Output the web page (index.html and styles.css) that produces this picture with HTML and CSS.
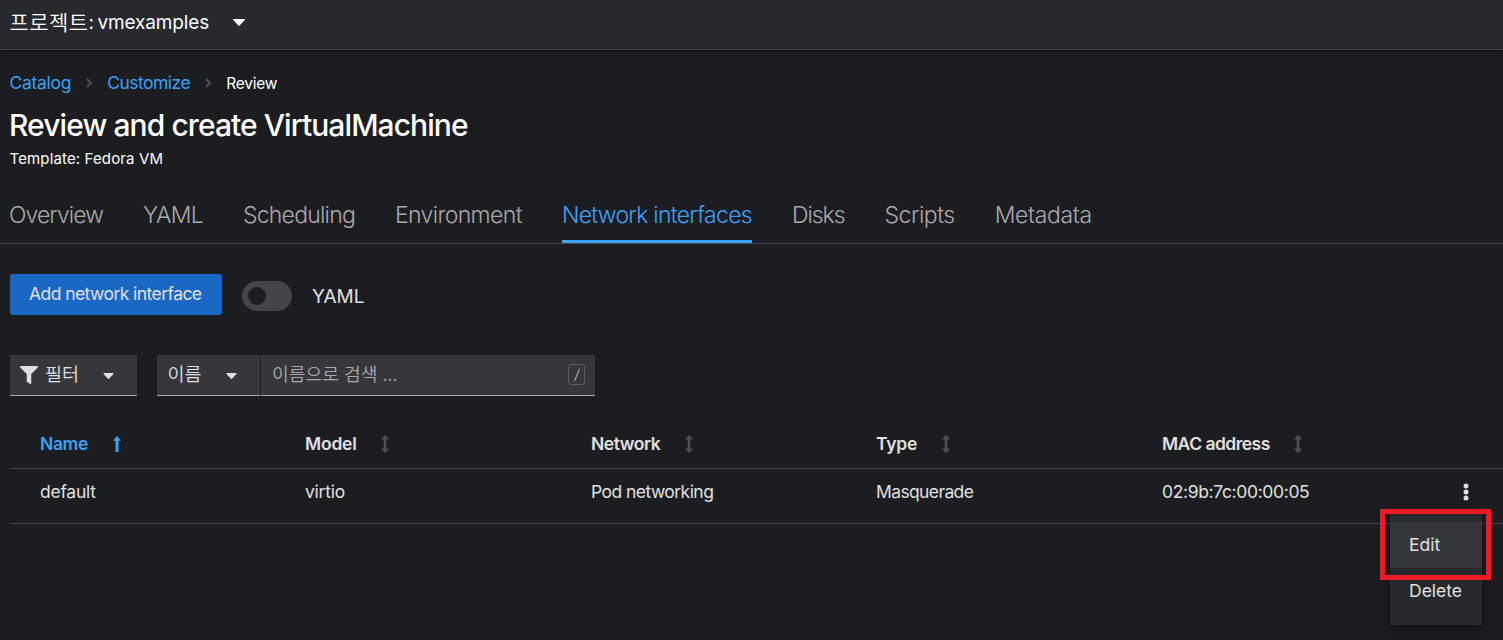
FILE: index.html
```html
<!DOCTYPE html>
<html lang="ko">
<head>
<meta charset="utf-8">
<title>Review and create VirtualMachine</title>
<link rel="stylesheet" href="styles.css">
</head>
<body>
<header class="project-bar">
  <button class="project-toggle"><span class="project-label"><span class="ko">프로젝트</span><span class="project-name">: vmexamples</span></span><svg class="caret" width="12" height="7" viewBox="0 0 12 7"><path d="M.7 0h10.600c.6 0 .9.7.5 1.100L6.600 6.600a.9.9 0 0 1-1.200 0L.2 1.100C-.2.7.1 0 .7 0z"/></svg></button>
</header>
<main class="page">
  <nav class="breadcrumb">
    <a class="crumb catalog" href="#">Catalog</a>
    <svg class="chevron" width="7" height="10" viewBox="0 0 7 10"><path d="M1 1l4 4-4 4"/></svg>
    <a class="crumb customize" href="#">Customize</a>
    <svg class="chevron" width="7" height="10" viewBox="0 0 7 10"><path d="M1 1l4 4-4 4"/></svg>
    <span class="current">Review</span>
  </nav>
  <h1 class="title">Review and create VirtualMachine</h1>
  <p class="template">Template: Fedora VM</p>
  <nav class="tabs">
    <a class="tab tab-overview">Overview</a>
    <a class="tab tab-yaml">YAML</a>
    <a class="tab tab-scheduling">Scheduling</a>
    <a class="tab tab-environment">Environment</a>
    <a class="tab tab-network active">Network interfaces</a>
    <a class="tab tab-disks">Disks</a>
    <a class="tab tab-scripts">Scripts</a>
    <a class="tab tab-metadata">Metadata</a>
  </nav>
  <div class="actions">
    <button class="primary">Add network interface</button>
    <span class="switch"><span class="knob"></span></span>
    <span class="switch-label">YAML</span>
  </div>
  <div class="filters">
    <button class="select filter"><svg class="funnel" width="18" height="18" viewBox="0 0 512 512"><path d="M488 0H24C2.700 0-8 25.900 7.100 41L192 225.900V432c0 7.800 3.800 15.200 10.200 19.700l80 56C298 518.700 320 507.500 320 488V225.900L504.900 41C520 25.900 509.300 0 488 0z"/></svg><span class="ko">필터</span><svg class="caret" width="11" height="6" viewBox="0 0 12 7"><path d="M.7 0h10.600c.6 0 .9.7.5 1.100L6.600 6.600a.9.9 0 0 1-1.200 0L.2 1.100C-.2.7.1 0 .7 0z"/></svg></button>
    <button class="select field"><span class="ko">이름</span><svg class="caret" width="11" height="6" viewBox="0 0 12 7"><path d="M.7 0h10.600c.6 0 .9.7.5 1.100L6.600 6.600a.9.9 0 0 1-1.200 0L.2 1.100C-.2.7.1 0 .7 0z"/></svg></button>
    <div class="search"><span class="placeholder">이름으로 검색 ...</span><kbd class="slash"><svg width="8" height="14" viewBox="0 0 8 14"><path d="M1.500 13l5-12"/></svg></kbd></div>
  </div>
  <section class="table">
    <div class="row head">
      <span class="cell sorted"><span class="h-name">Name</span><svg class="sort-up" width="8" height="16" viewBox="0 0 8 16"><path d="M4 0l4 4.800H5.500V16h-3V4.800H0z"/></svg></span>
      <span class="cell"><span class="h-model">Model</span><svg class="sort" width="8" height="18" viewBox="0 0 8 18"><path d="M4 0l4 4.600H5.300v8.800H8L4 18l-4-4.600h2.700V4.600H0z"/></svg></span>
      <span class="cell"><span class="h-network">Network</span><svg class="sort" width="8" height="18" viewBox="0 0 8 18"><path d="M4 0l4 4.600H5.300v8.800H8L4 18l-4-4.600h2.700V4.600H0z"/></svg></span>
      <span class="cell"><span class="h-type">Type</span><svg class="sort" width="8" height="18" viewBox="0 0 8 18"><path d="M4 0l4 4.600H5.300v8.800H8L4 18l-4-4.600h2.700V4.600H0z"/></svg></span>
      <span class="cell"><span class="h-mac">MAC address</span><svg class="sort" width="8" height="18" viewBox="0 0 8 18"><path d="M4 0l4 4.600H5.300v8.800H8L4 18l-4-4.600h2.700V4.600H0z"/></svg></span>
    </div>
    <div class="row body">
      <span class="cell c-name">default</span>
      <span class="cell c-model">virtio</span>
      <span class="cell c-network">Pod networking</span>
      <span class="cell c-type">Masquerade</span>
      <span class="cell c-mac">02:9b:7c:00:00:05</span>
      <span class="kebab"><svg width="6" height="18" viewBox="0 0 6 18"><circle cx="3" cy="3" r="2.500"/><circle cx="3" cy="9" r="2.500"/><circle cx="3" cy="15" r="2.500"/></svg></span>
    </div>
  </section>
</main>
<div class="menu">
  <a class="item hover">Edit</a>
  <a class="item">Delete</a>
</div>
<div class="highlight"></div>
</body>
</html>
```
FILE: styles.css
```css
* { box-sizing: border-box; }
html, body { margin: 0; height: 640px; overflow: hidden; }
body {
  position: relative;
  background: #1c1d21;
  color: #e0e0e0;
  font: 400 17.5px/24px Inter, "Noto Sans CJK KR", sans-serif;
  white-space: nowrap;
}
button { font: inherit; color: inherit; border: 0; padding: 0; text-align: left; }
a { text-decoration: none; color: inherit; }
svg { display: block; flex: none; }
.caret, .funnel, .kebab svg { fill: currentColor; }
.ko, .placeholder { font-family: "Noto Sans CJK KR", sans-serif; font-weight: 350; }

.project-bar {
  position: relative;
  height: 50px;
  padding-left: 10px;
  background: #26292d;
  border-bottom: 1px solid #444548;
  box-shadow: 0 1px 3px rgba(0, 0, 0, .45);
}
.project-toggle { display: flex; align-items: center; height: 45px; background: none; color: #fff; }
.project-label { display: flex; width: 223px; font-size: 19px; line-height: 26px; }
.project-label .ko { width: 79px; margin-left: -.5px; font-size: 21px; letter-spacing: .4px; line-height: 22px; }
.project-name { letter-spacing: -.15px; word-spacing: -1.5px; }

.breadcrumb { display: flex; align-items: center; height: 24px; margin: 21px 0 0 9.5px; }
.crumb { color: #3ba2f5; }
.catalog { letter-spacing: -.3px; }
.customize { letter-spacing: -.5px; }
.chevron { fill: none; stroke: #4f5255; stroke-width: 2; margin: 0 14.5px; }
.current { color: #fff; font-size: 15.5px; letter-spacing: -.25px; padding-top: 2px; }
.title { margin: 10px 0 0 9px; height: 40px; font-size: 30px; line-height: 40px; font-weight: 500; letter-spacing: -.92px; color: #fff; }
.template { margin: 4px 0 0 9.5px; height: 20px; line-height: 20px; font-size: 15px; letter-spacing: .14px; color: #fff; }

.tabs { display: flex; height: 61px; margin-top: 14px; padding-left: 9px; gap: 40px; border-bottom: 1px solid #444548; }
.tab { height: 60px; padding-top: 18px; font-size: 23px; line-height: 28px; font-weight: 300; color: #a9a9ab; }
.tab.active { color: #3ba2f5; border-bottom: 3px solid #3ba2f5; }
.tab-overview { letter-spacing: -.95px; }
.tab-yaml { letter-spacing: -.7px; }
.tab-scheduling { letter-spacing: -.78px; }
.tab-environment { letter-spacing: -.63px; }
.tab-network { letter-spacing: -.72px; }
.tab-disks { letter-spacing: -1.05px; }
.tab-scripts { letter-spacing: -.48px; }
.tab-metadata { letter-spacing: -.35px; }

.actions { display: flex; align-items: center; height: 41px; margin: 30px 0 0 10px; }
.primary { width: 212px; height: 41px; padding: 0 0 2px 19px; border-radius: 3px; background: #1a68c6; letter-spacing: -.56px; }
.switch { width: 50px; height: 30px; margin: 3px 20px 0; padding: 6px; border-radius: 15px; background: #444548; }
.knob { display: block; width: 18px; height: 18px; border-radius: 50%; background: #1c1d21; }
.switch-label { font-size: 19px; padding-top: 4px; }

.filters { display: flex; height: 41px; margin: 40px 0 0 10px; }
.select, .search { display: flex; align-items: center; height: 41px; background: #36373a; border-bottom: 1px solid #a9a9ab; }
.filter { width: 127px; padding-left: 10px; margin-right: 20px; }
.select .ko { width: 58px; padding-bottom: 4px; font-size: 18.5px; }
.filter .ko { margin-left: 7px; }
.select .caret { margin-top: 2px; }
.field { width: 103px; padding-left: 10.5px; margin-right: 1px; }
.search { width: 334px; padding: 0 10px 0 11px; justify-content: space-between; color: #a9a9ab; }
.placeholder { padding-bottom: 5px; font-size: 18.2px; }
.slash { display: flex; align-items: center; justify-content: center; width: 17px; height: 21px; margin-bottom: 1px; border: 1px solid #5b5d60; border-radius: 3px; }
.slash svg { fill: none; stroke: #c0c0c0; }

.table { margin-left: 10px; margin-top: 24px; }
.row { display: grid; grid-template-columns: 265px 286px 285px 286px 286px 1fr; align-items: center; padding-left: 30px; border-bottom: 1px solid #444548; }
.head { height: 49px; font-weight: 600; }
.body { height: 55px; padding-bottom: 8px; }
.cell { display: flex; align-items: center; }
.sorted { color: #3ba2f5; }
.h-name { letter-spacing: -.4px; }
.h-model, .h-type { letter-spacing: -.2px; }
.h-network { letter-spacing: -.45px; }
.h-mac { letter-spacing: -.52px; }
.c-name, .c-model { letter-spacing: -.25px; }
.c-network { letter-spacing: -.55px; }
.c-type { letter-spacing: -.62px; }
.c-mac { letter-spacing: -.35px; }
.sort { margin-left: 24.5px; fill: #4f5255; }
.sort-up { margin-left: 25px; fill: #3ba2f5; }
.kebab { padding-left: 15px; }

.menu { position: absolute; left: 1390px; top: 512px; width: 92px; height: 113px; padding-top: 10px; background: #26292d; box-shadow: 0 4px 10px rgba(0, 0, 0, .5); }
.item { display: block; height: 46px; padding-left: 19px; line-height: 46px; }
.hover { background: #36373a; }
.highlight { position: absolute; left: 1380px; top: 509px; width: 111px; height: 71px; border: 5px solid #ed1c24; }
```
